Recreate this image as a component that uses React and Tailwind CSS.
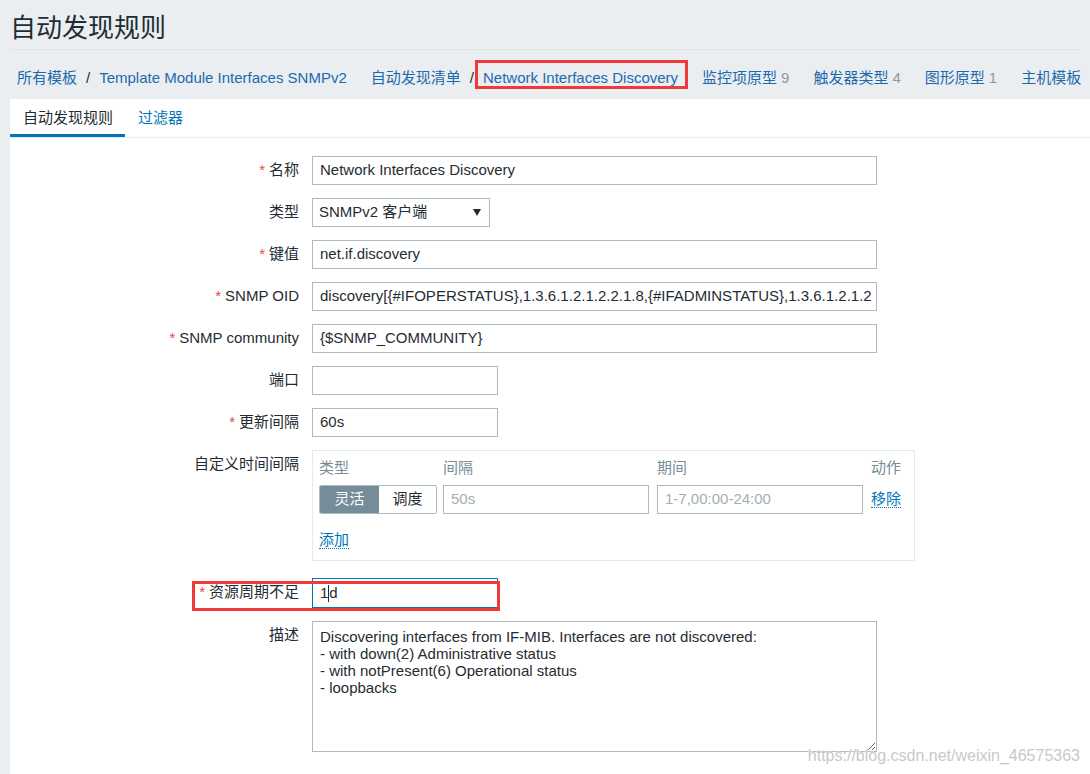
import React from "react";

const font = "font-['Liberation_Sans','Noto_Sans_CJK_SC',sans-serif]";

const Required = () => <span className="text-[#e04848] mr-[4px]">*</span>;

const Label = ({ children, required }) => (
  <div className="w-[289px] h-[29px] flex items-center justify-end text-[15px] text-[#1f2c33] shrink-0">
    {required && <Required />}
    {children}
  </div>
);

const TextBox = ({ value, width = "w-[565px]", muted }) => (
  <div
    className={`${width} h-[29px] border border-[#acbbc2] bg-white px-[7px] flex items-center text-[15px] whitespace-nowrap overflow-hidden ${
      muted ? "text-[#a3afb7]" : "text-[#1f2c33]"
    }`}
  >
    {value}
  </div>
);

const Row = ({ label, required, children, className = "mb-[13px]" }) => (
  <div className={`relative flex items-start ${className}`}>
    <Label required={required}>{label}</Label>
    <div className="ml-[13px]">{children}</div>
  </div>
);

const DottedLink = ({ children }) => (
  <span className="text-[#0275b8] border-b border-dotted border-[#0275b8] leading-[19px]">
    {children}
  </span>
);

const Crumb = ({ children }) => <span className="text-[#1b6aae]">{children}</span>;

const Sep = () => <span className="mx-[9px] text-[#1f2c33]">/</span>;

const Count = ({ n }) => <span className="ml-[4px] text-[#8a9aa3]">{n}</span>;

export default function App() {
  return (
    <div className={`${font} relative min-h-[774px] bg-[#ebeef0] flex flex-col overflow-hidden`}>
      {/* header */}
      <div className="mx-[10px] h-[50px] flex items-center border-b border-[#dde3e6]">
        <h1 className="text-[26px] leading-none text-[#1f2c33] pt-[6px]">自动发现规则</h1>
      </div>

      {/* breadcrumbs */}
      <div className="h-[49px] flex items-center pl-[17px] pt-[7px] text-[15px] whitespace-nowrap">
        <Crumb>所有模板</Crumb>
        <Sep />
        <Crumb>Template Module Interfaces SNMPv2</Crumb>
        <span className="ml-[24px]">
          <Crumb>自动发现清单</Crumb>
        </span>
        <Sep />
        <span className="relative">
          <Crumb>Network Interfaces Discovery</Crumb>
          <span className="absolute -left-[8px] -right-[10px] -top-[7px] bottom-0 border-[3px] border-[#f03a3a]"></span>
        </span>
        <span className="ml-[24px]">
          <Crumb>监控项原型</Crumb>
          <Count n="9" />
        </span>
        <span className="ml-[24px]">
          <Crumb>触发器类型</Crumb>
          <Count n="4" />
        </span>
        <span className="ml-[24px]">
          <Crumb>图形原型</Crumb>
          <Count n="1" />
        </span>
        <span className="ml-[24px]">
          <Crumb>主机模板</Crumb>
        </span>
      </div>

      {/* panel */}
      <div className="ml-[10px] flex-1 bg-white flex flex-col">
        {/* tabs */}
        <div className="h-[39px] flex items-end border-b border-[#ebeef0] text-[15px]">
          <div className="w-[115px] h-[39px] pl-[13px] flex items-center border-b-[3px] border-[#0275b8] text-[#1f2c33] pt-[4px]">
            自动发现规则
          </div>
          <div className="ml-[13px] h-[39px] flex items-center text-[#0275b8] pt-[1px]">过滤器</div>
        </div>

        {/* form */}
        <div className="pt-[18px]">
          <Row label="名称" required>
            <TextBox value="Network Interfaces Discovery" />
          </Row>

          <Row label="类型">
            <div className="w-[178px] h-[29px] border border-[#acbbc2] bg-white pl-[6px] pr-[8px] flex items-center justify-between text-[15px] text-[#1f2c33]">
              <span>SNMPv2 客户端</span>
              <svg width="8" height="7" viewBox="0 0 8 7">
                <path d="M0 0 H8 L4 7 Z" fill="#1f2c33" />
              </svg>
            </div>
          </Row>

          <Row label="键值" required>
            <TextBox value="net.if.discovery" />
          </Row>

          <Row label="SNMP OID" required>
            <TextBox value="discovery[{#IFOPERSTATUS},1.3.6.1.2.1.2.2.1.8,{#IFADMINSTATUS},1.3.6.1.2.1.2" />
          </Row>

          <Row label="SNMP community" required>
            <TextBox value="{$SNMP_COMMUNITY}" />
          </Row>

          <Row label="端口">
            <TextBox value="" width="w-[186px]" />
          </Row>

          <Row label="更新间隔" required>
            <TextBox value="60s" width="w-[186px]" />
          </Row>

          <Row label="自定义时间间隔" className="mb-[17px]">
            <div className="w-[603px] h-[111px] border border-[#e6e9eb] pl-[6px] pt-[6px] text-[15px]">
              <div className="flex h-[22px] items-center text-[#768d99]">
                <span className="w-[124px]">类型</span>
                <span className="w-[214px]">间隔</span>
                <span className="w-[214px]">期间</span>
                <span>动作</span>
              </div>
              <div className="flex items-center mt-[6px]">
                <div className="w-[118px] h-[29px] flex border border-[#acbbc2] rounded-[2px] overflow-hidden">
                  <div className="w-[59px] bg-[#768d99] text-white flex items-center justify-center">灵活</div>
                  <div className="flex-1 text-[#1f2c33] flex items-center justify-center">调度</div>
                </div>
                <div className="ml-[6px]">
                  <TextBox value="50s" width="w-[206px]" muted />
                </div>
                <div className="ml-[8px]">
                  <TextBox value="1-7,00:00-24:00" width="w-[206px]" muted />
                </div>
                <div className="ml-[8px]">
                  <DottedLink>移除</DottedLink>
                </div>
              </div>
              <div className="mt-[15px]">
                <DottedLink>添加</DottedLink>
              </div>
            </div>
          </Row>

          <Row label="资源周期不足" required className="mb-[13px]">
            <div className="w-[186px] h-[30px] border border-[#0275b8] bg-white px-[7px] flex items-center text-[15px] text-[#1f2c33]">
              <span>1</span>
              <span className="w-px h-[17px] bg-[#1f2c33]"></span>
              <span>d</span>
            </div>
            <span className="absolute left-[182px] top-[3px] w-[308px] h-[30px] border-[3px] border-[#f03a3a]"></span>
          </Row>

          <Row label="描述">
            <textarea
              readOnly
              className="block w-[565px] h-[131px] border border-[#acbbc2] bg-white px-[7px] pt-[6px] text-[15px] leading-[17px] text-[#1f2c33] outline-none resize"
              defaultValue={
                "Discovering interfaces from IF-MIB. Interfaces are not discovered:\n- with down(2) Administrative status\n- with notPresent(6) Operational status\n- loopbacks"
              }
            />
          </Row>
        </div>
      </div>

      {/* watermark */}
      <span className="absolute right-[10px] top-[744px] text-[16px] text-[#c9c9c9] [text-shadow:0_0_2px_#fff,0_0_1px_#fff]">
        https://blog.csdn.net/weixin_46575363
      </span>
    </div>
  );
}
